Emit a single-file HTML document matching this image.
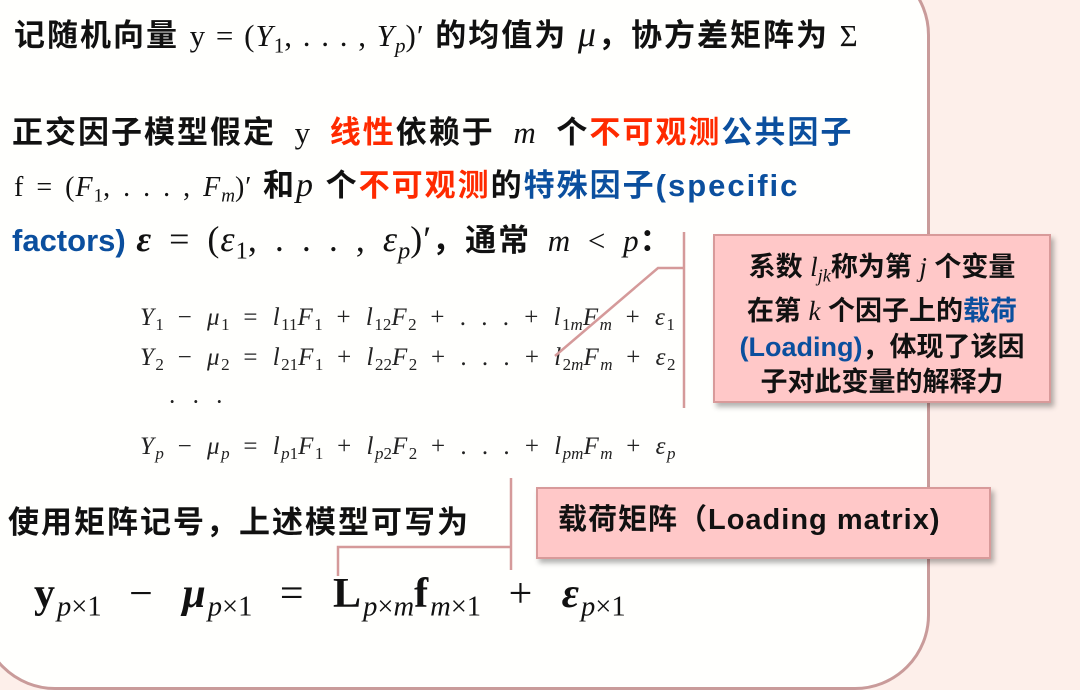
<!DOCTYPE html>
<html><head><meta charset="utf-8"><style>
body{margin:0;width:1080px;height:625px;overflow:hidden;background:#fdefea;position:relative;font-family:"Liberation Sans","Noto Sans CJK SC",sans-serif;}
.panel{position:absolute;left:-20px;top:-40px;width:950px;height:730px;background:#fffffd;border:3px solid #c99b9a;border-radius:75px;box-sizing:border-box}
.t{position:absolute;font-weight:bold;font-size:31px;letter-spacing:2px;color:#111;white-space:nowrap;line-height:1}
.m{font-family:"Liberation Serif",serif;font-weight:normal;letter-spacing:1px;word-spacing:4px}
.i{font-family:"Liberation Serif",serif;font-style:italic;font-weight:normal}
.r{color:#ff2a00}.b{color:#0b4f9e}
.eq{position:absolute;font-family:"Liberation Serif",serif;font-size:25px;letter-spacing:1.5px;word-spacing:6px;color:#222;white-space:nowrap;line-height:1}
sub{font-size:68%;vertical-align:-0.3em;letter-spacing:0}
.box{position:absolute;background:#ffc8c8;border:2px solid #d89a9a;box-shadow:3px 4px 5px rgba(0,0,0,.3);box-sizing:border-box}
</style></head><body>
<div class="panel"></div>
<div class="t" style="left:14px;top:16px">记随机向量 <span class="m" style="word-spacing:1px">y = (<i>Y</i><sub>1</sub>, . . . , <i>Y<sub>p</sub></i>)′</span> 的均值为 <span class="i" style="font-size:36px">μ</span>，协方差矩阵为 <span class="m">Σ</span></div>
<div class="t" style="left:12px;top:117px">正交因子模型假定 <span class="m" style="margin:0 8px">y</span> <span class="r">线性</span>依赖于 <span class="i" style="margin:0 8px">m</span> 个<span class="r">不可观测</span><span class="b">公共因子</span></div>
<div class="t" style="left:14px;top:169px"><span class="m" style="font-size:28px">f = (<i>F</i><sub>1</sub>, . . . , <i>F<sub>m</sub></i>)′</span> 和<span class="i" style="font-size:34px">p</span> 个<span class="r">不可观测</span>的<span class="b">特殊因子(specific</span></div>
<div class="t" style="left:12px;top:221px"><span class="b" style="letter-spacing:0">factors)</span> <span class="m" style="font-size:36px;word-spacing:7px"><i style="font-weight:bold">ε</i> = (<i>ε</i><sub>1</sub>, . . . , <i>ε<sub>p</sub></i>)′</span>，通常 <span class="m" style="word-spacing:8px;margin-left:6px"><i>m</i> &lt; <i>p</i></span>：</div>
<div class="eq" style="left:140px;top:305px"><i>Y</i><sub>1</sub> − <i>μ</i><sub>1</sub> = <i>l</i><sub>11</sub><i>F</i><sub>1</sub> + <i>l</i><sub>12</sub><i>F</i><sub>2</sub> + . . . + <i>l</i><sub>1<i>m</i></sub><i>F<sub>m</sub></i> + <i>ε</i><sub>1</sub></div>
<div class="eq" style="left:140px;top:345px"><i>Y</i><sub>2</sub> − <i>μ</i><sub>2</sub> = <i>l</i><sub>21</sub><i>F</i><sub>1</sub> + <i>l</i><sub>22</sub><i>F</i><sub>2</sub> + . . . + <i>l</i><sub>2<i>m</i></sub><i>F<sub>m</sub></i> + <i>ε</i><sub>2</sub></div>
<div class="eq" style="left:168px;top:390px">· · ·</div>
<div class="eq" style="left:140px;top:434px"><i>Y<sub>p</sub></i> − <i>μ<sub>p</sub></i> = <i>l</i><sub><i>p</i>1</sub><i>F</i><sub>1</sub> + <i>l</i><sub><i>p</i>2</sub><i>F</i><sub>2</sub> + . . . + <i>l<sub>pm</sub></i><i>F<sub>m</sub></i> + <i>ε<sub>p</sub></i></div>
<div class="t" style="left:8px;top:507px">使用矩阵记号，上述模型可写为</div>
<div class="eq" style="left:34px;top:573px;font-size:42px;letter-spacing:2px;word-spacing:15px;color:#111"><b>y</b><sub><i>p</i>×1</sub> − <b><i>μ</i></b><sub><i>p</i>×1</sub> = <b>L</b><sub><i>p</i>×<i>m</i></sub><b>f</b><sub><i>m</i>×1</sub> + <b><i>ε</i></b><sub><i>p</i>×1</sub></div>
<svg style="position:absolute;left:0;top:0" width="1080" height="625"><g stroke="#d59a9a" stroke-width="2.5" fill="none"><path d="M684 232V408M684 268H658L555 356"/><path d="M511 478V570M511 547H338V576"/></g></svg>
<div class="box" style="left:713px;top:234px;width:338px;height:169px"></div>
<div class="t" style="left:713px;top:250px;width:338px;text-align:center;font-size:27px;letter-spacing:0;line-height:35.5px">系数 <span class="i">l<sub>jk</sub></span>称为第 <span class="i">j</span> 个变量<br>在第 <span class="i">k</span> 个因子上的<span class="b">载荷</span><br><span class="b">(Loading)</span>，体现了该因<br>子对此变量的解释力</div>
<div class="box" style="left:536px;top:487px;width:455px;height:72px"></div>
<div class="t" style="left:558px;top:506px;font-size:29px;letter-spacing:1px">载荷矩阵（Loading matrix)</div>
</body></html>
